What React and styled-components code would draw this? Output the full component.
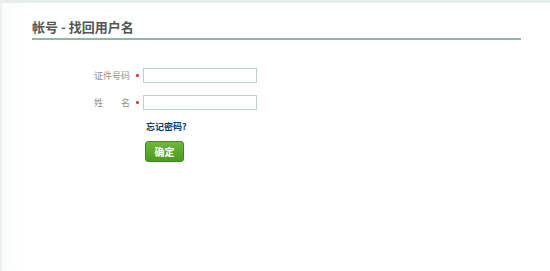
import styled, { createGlobalStyle } from 'styled-components';

const Global = createGlobalStyle`
  html, body { margin: 0; padding: 0; background: #fff; }
  body { font-family: "Noto Sans CJK SC", "Noto Sans", sans-serif; }
`;

const Frame = styled.div`
  width: 550px;
  height: 271px;
  box-sizing: border-box;
  border-top: 3px solid #e9ecec;
  border-left: 2px solid #eef0f0;
  background: linear-gradient(90deg, #f9fafa 0, #fcfdfd 14px, #fff 16px);
  padding: 14px 29px 0 30px;
`;

const Title = styled.h2`
  margin: 0;
  font-size: 13px;
  font-weight: bold;
  color: #555;
  line-height: 20px;
  padding-bottom: 1px;
  border-bottom: 2px solid #8fb7a6;
`;

const Form = styled.div`
  display: grid;
  grid-template-columns: 98px 13px 114px;
  align-items: center;
  row-gap: 12px;
  margin-top: 28px;
`;

const Label = styled.span`
  font-size: 9px;
  color: #909090;
  text-align: right;
  white-space: pre;
`;

const Star = styled.span`
  justify-self: center;
  width: 3px;
  height: 3px;
  border-radius: 1px;
  background: #c84a4a;
  margin-left: 1px;
`;

const Input = styled.input`
  box-sizing: border-box;
  width: 114px;
  height: 15px;
  border: 1px solid #b8d6c4;
  padding: 0 2px;
  margin: 0;
  outline: none;
`;

const Actions = styled.div`
  grid-column: 3;
  display: flex;
  flex-direction: column;
  align-items: flex-start;
  gap: 8px;
  padding-left: 3px;
  margin-top: -2px;
`;

const Forgot = styled.a`
  font-size: 9px;
  font-weight: bold;
  color: #143a6c;
  text-decoration: none;
`;

const Submit = styled.button`
  width: 39px;
  height: 21px;
  margin-left: -1px;
  border: 1px solid #3f8a1c;
  border-radius: 3px;
  background: linear-gradient(#6cb83a, #4d9a22);
  color: #fff;
  font-family: inherit;
  font-size: 10px;
  font-weight: bold;
  padding: 0;
`;

export default function App() {
  return (
    <>
      <Global />
      <Frame>
        <Title>帐号 - 找回用户名</Title>
        <Form>
          <Label>证件号码</Label>
          <Star />
          <Input />
          <Label>{'姓　　名'}</Label>
          <Star />
          <Input />
          <Actions>
            <Forgot href="#">忘记密码?</Forgot>
            <Submit>确定</Submit>
          </Actions>
        </Form>
      </Frame>
    </>
  );
}
